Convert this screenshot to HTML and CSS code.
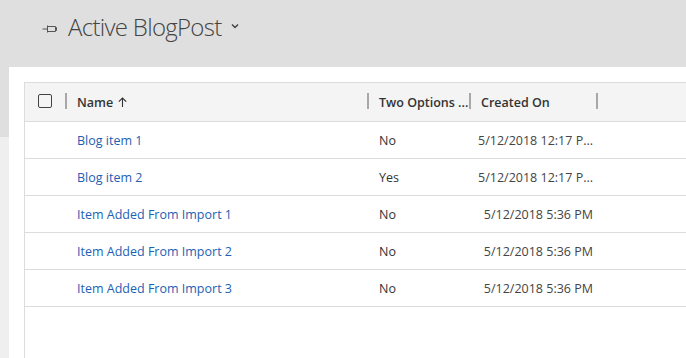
FILE: index.html
```html
<!DOCTYPE html>
<html>
<head>
<meta charset="utf-8">
<link rel="stylesheet" href="styles.css">
</head>
<body>
<div class="page">
  <header class="titlebar">
    <svg class="pin" width="16" height="10" viewBox="0 0 16 10">
      <path d="M0.5 5H5M5.5 1.5V8.5M6 2.5H13.5V7.5H6M13.5 3.5H14.5V6.5H13.5" fill="none" stroke="#555" stroke-width="1"/>
    </svg>
    <h1 class="title">Active BlogPost</h1>
    <svg class="chev" width="8" height="6" viewBox="0 0 8 6">
      <path d="M1 1.5L4 4.5L7 1.5" fill="none" stroke="#444" stroke-width="1.5"/>
    </svg>
  </header>
  <main class="panel">
    <div class="grid">
      <div class="row head">
        <div class="cell check"><span class="box"></span></div>
        <div class="cell col sep">Name <svg class="arrow" width="9" height="10" viewBox="0 0 9 10"><path d="M4.5 10V1M0.8 4.7L4.5 1L8.2 4.7" fill="none" stroke="#333" stroke-width="1.1"/></svg></div>
        <div class="cell col sep">Two Options ...</div>
        <div class="cell col sep">Created On</div>
        <div class="cell col sep"></div>
      </div>
      <div class="row">
        <div class="cell check"></div>
        <div class="cell col"><a class="link">Blog item 1</a></div>
        <div class="cell col">No</div>
        <div class="cell col date">5/12/2018 12:17 P...</div>
        <div class="cell col"></div>
      </div>
      <div class="row">
        <div class="cell check"></div>
        <div class="cell col"><a class="link">Blog item 2</a></div>
        <div class="cell col">Yes</div>
        <div class="cell col date">5/12/2018 12:17 P...</div>
        <div class="cell col"></div>
      </div>
      <div class="row">
        <div class="cell check"></div>
        <div class="cell col"><a class="link">Item Added From Import 1</a></div>
        <div class="cell col">No</div>
        <div class="cell col date">5/12/2018 5:36 PM</div>
        <div class="cell col"></div>
      </div>
      <div class="row">
        <div class="cell check"></div>
        <div class="cell col"><a class="link">Item Added From Import 2</a></div>
        <div class="cell col">No</div>
        <div class="cell col date">5/12/2018 5:36 PM</div>
        <div class="cell col"></div>
      </div>
      <div class="row">
        <div class="cell check"></div>
        <div class="cell col"><a class="link">Item Added From Import 3</a></div>
        <div class="cell col">No</div>
        <div class="cell col date">5/12/2018 5:36 PM</div>
        <div class="cell col"></div>
      </div>
    </div>
  </main>
</div>
</body>
</html>
```
FILE: styles.css
```css
html, body {
  margin: 0;
  padding: 0;
  height: 100%;
}
body {
  font-family: "Open Sans", "Noto Sans", sans-serif;
  background: linear-gradient(#dfdfdf 0, #dfdfdf 137px, #efefef 137px);
  overflow: hidden;
}
.page {
  display: flex;
  flex-direction: column;
  height: 358px;
}
.titlebar {
  height: 67px;
  display: flex;
  align-items: center;
  padding-left: 42px;
  padding-bottom: 14px;
  box-sizing: border-box;
}
.pin {
  margin-top: 4px;
  margin-right: 10px;
}
.title {
  margin: 0;
  font-size: 24px;
  font-weight: 300;
  color: #444;
  letter-spacing: -0.7px;
}
.chev {
  margin-left: 9px;
  margin-top: -2px;
}
.panel {
  flex: 1;
  margin-left: 9px;
  background: #fff;
  padding: 15px 0 0 15px;
  display: flex;
}
.grid {
  flex: 1;
  border-left: 1px solid #dcdcdc;
  border-top: 1px solid #dcdcdc;
}
.row {
  display: grid;
  grid-template-columns: 41px 302px 102px 127px 1fr;
  height: 36px;
  border-bottom: 1px solid #dcdcdc;
  font-size: 12.5px;
  color: #333;
}
.row.head {
  height: 38px;
  background: #f4f4f4;
  font-weight: 600;
}
.cell {
  display: flex;
  align-items: center;
  position: relative;
  white-space: nowrap;
}
.check {
  padding-left: 13px;
}
.box {
  width: 12px;
  height: 12px;
  border: 1px solid #444;
  border-radius: 2px;
  margin-top: -2px;
}
.col {
  padding-left: 11px;
}
.sep::before {
  content: "";
  position: absolute;
  left: -1px;
  top: 10px;
  width: 2px;
  height: 16px;
  background: #a8a8a8;
}
.arrow {
  margin-left: 5px;
}
.date {
  justify-content: flex-end;
  padding-right: 4px;
  padding-left: 0;
  color: #444;
}
.link {
  color: #1d5fb4;
  text-decoration: none;
}
```
